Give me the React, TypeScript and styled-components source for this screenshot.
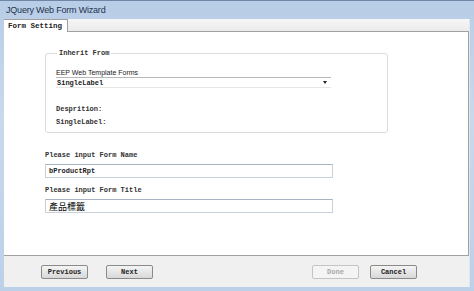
import React from 'react';
import styled, { createGlobalStyle } from 'styled-components';

const GlobalStyle = createGlobalStyle`
  html, body {
    margin: 0;
    padding: 0;
    background: #ffffff;
  }
`;

const Window = styled.div`
  width: 474px;
  height: 291px;
  box-sizing: border-box;
  display: flex;
  flex-direction: column;
  background: linear-gradient(180deg, #b8cde6 0%, #c9d9ec 40%, #bcd0e8 100%);
  border-top: 1px solid #6f86a5;
  padding: 0 4px 4px 4px;
`;

const TitleBar = styled.div`
  height: 18px;
  display: flex;
  align-items: center;
  padding-left: 2px;
  font-family: 'Liberation Sans', Arial, sans-serif;
  font-size: 9px;
  letter-spacing: -0.2px;
  color: #1e3350;
`;

const Body = styled.div`
  flex: 1;
  display: flex;
  flex-direction: column;
  background: #f0f0f0;
  border-right: 1px solid #dfe7f1;
`;

const TabStrip = styled.div`
  height: 13px;
  display: flex;
  align-items: flex-end;
  background: linear-gradient(180deg, #f6f6f6, #ececec);
  border-bottom: 1px solid #a0a0a0;
  box-sizing: border-box;
`;

const Tab = styled.div`
  height: 13px;
  box-sizing: border-box;
  padding: 0 5px 0 4px;
  margin-bottom: -1px;
  background: #ffffff;
  border: 1px solid #a0a0a0;
  border-bottom: none;
  border-left: none;
  font-family: 'Liberation Mono', 'Courier New', monospace;
  font-size: 7.5px;
  font-weight: bold;
  color: #222;
  display: flex;
  align-items: center;
`;

const Panel = styled.div`
  flex: 1;
  background: #ffffff;
  border-right: 1px solid #a0a0a0;
  border-bottom: 1px solid #a0a0a0;
  padding: 17px 0 0 41px;
  display: flex;
  flex-direction: column;
`;

const Group = styled.fieldset`
  width: 343px;
  height: 84px;
  box-sizing: border-box;
  margin: 0;
  padding: 11px 0 0 10px;
  border: 1px solid #dcdcdc;
  border-radius: 3px;
  display: flex;
  flex-direction: column;
`;

const Legend = styled.legend`
  padding: 0 2px;
  margin-left: 1px;
  font-family: 'Liberation Mono', 'Courier New', monospace;
  font-size: 7px;
  font-weight: bold;
  color: #333;
`;

const SansLabel = styled.div`
  font-family: 'Liberation Sans', Arial, sans-serif;
  font-size: 7px;
  color: #222;
  line-height: 9px;
`;

const MonoLabel = styled.div<{ top?: number }>`
  font-family: 'Liberation Mono', 'Courier New', monospace;
  font-size: 7px;
  font-weight: bold;
  color: #333;
  line-height: 9px;
  margin-top: ${(p) => p.top ?? 0}px;
`;

const Select = styled.div`
  width: 275px;
  height: 11px;
  box-sizing: border-box;
  display: flex;
  align-items: center;
  justify-content: space-between;
  padding: 0 4px 0 1px;
  border-top: 1px solid #b8b8b8;
  border-bottom: 1px solid #e6e6e6;
  font-family: 'Liberation Mono', 'Courier New', monospace;
  font-size: 7px;
  font-weight: bold;
  color: #222;
`;

const Arrow = styled.span`
  width: 0;
  height: 0;
  border-left: 2.5px solid transparent;
  border-right: 2.5px solid transparent;
  border-top: 3px solid #222;
`;

const TextBox = styled.div<{ top?: number }>`
  width: 288px;
  height: 14px;
  box-sizing: border-box;
  margin-top: ${(p) => p.top ?? 0}px;
  padding-left: 3px;
  display: flex;
  align-items: center;
  border: 1px solid #c8d0dc;
  border-top-color: #a9b3c2;
  font-family: 'Liberation Mono', 'Courier New', monospace;
  font-size: 7px;
  font-weight: bold;
  color: #222;
`;

const CjkText = styled.span`
  font-family: 'Noto Sans CJK TC', 'Noto Sans CJK SC', sans-serif;
  font-size: 9px;
  font-weight: normal;
  color: #000;
`;

const Footer = styled.div`
  height: 31px;
  display: flex;
  align-items: center;
  padding: 0 0 0 37px;
`;

const Button = styled.button<{ disabled?: boolean; gap?: number }>`
  width: 47px;
  height: 14px;
  box-sizing: border-box;
  margin: 0 0 0 ${(p) => p.gap ?? 0}px;
  padding: 0;
  border: 1px solid ${(p) => (p.disabled ? '#c4c4c4' : '#8a8a8a')};
  border-radius: 2px;
  background: ${(p) =>
    p.disabled ? '#f4f4f4' : 'linear-gradient(180deg, #f4f4f4 0%, #e6e6e6 50%, #d8d8d8 100%)'};
  font-family: 'Liberation Mono', 'Courier New', monospace;
  font-size: 7px;
  font-weight: bold;
  color: ${(p) => (p.disabled ? '#a8a8a8' : '#222')};
`;

export default function App() {
  return (
    <>
      <GlobalStyle />
      <Window>
        <TitleBar>JQuery Web Form Wizard</TitleBar>
        <Body>
          <TabStrip>
            <Tab>Form Setting</Tab>
          </TabStrip>
          <Panel>
            <Group>
              <Legend>Inherit From</Legend>
              <SansLabel>EEP Web Template Forms</SansLabel>
              <Select>
                SingleLabel
                <Arrow />
              </Select>
              <MonoLabel top={17}>Desprition:</MonoLabel>
              <MonoLabel top={4}>SingleLabel:</MonoLabel>
            </Group>
            <MonoLabel top={18}>Please input Form Name</MonoLabel>
            <TextBox top={4}>bProductRpt</TextBox>
            <MonoLabel top={8}>Please input Form Title</MonoLabel>
            <TextBox top={4}>
              <CjkText>產品標籤</CjkText>
            </TextBox>
          </Panel>
          <Footer>
            <Button>Previous</Button>
            <Button gap={18}>Next</Button>
            <Button gap={159} disabled>
              Done
            </Button>
            <Button gap={11}>Cancel</Button>
          </Footer>
        </Body>
      </Window>
    </>
  );
}
